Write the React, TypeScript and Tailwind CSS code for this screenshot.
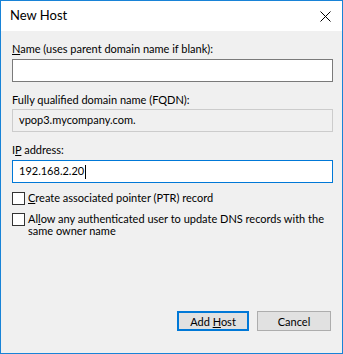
const font = { fontFamily: 'Lato, "Noto Sans", sans-serif' };

const Check = ({ children }: { children: React.ReactNode }) => (
  <div className="flex items-start gap-[3px]">
    <span className="h-[13px] w-[13px] shrink-0 border border-[#333] bg-white" />
    <span className="pt-[0px] leading-[12px]">{children}</span>
  </div>
);

export default function App() {
  return (
    <div
      className="flex h-[354px] w-[343px] flex-col border border-[#1883d7] bg-[#f0f0f0] text-[11px] text-black"
      style={font}
    >
      <div className="flex h-[30px] shrink-0 items-center justify-between bg-white pl-[9px] pr-[11px]">
        <span className="text-[13px]">New Host</span>
        <svg width="11" height="11" viewBox="0 0 11 11">
          <path d="M0.5 0.5 L10.5 10.5 M10.5 0.5 L0.5 10.5" stroke="#000" strokeWidth="1" />
        </svg>
      </div>
      <div className="flex flex-1 flex-col pl-[11px] pr-[9px]">
        <div className="mt-[10px] h-[16px] leading-[16px]">
          <u>N</u>ame (uses parent domain name if blank):
        </div>
        <div className="mt-[2px] h-[23px] border border-[#7a7a7a] bg-white" />
        <div className="mt-[10px] h-[16px] leading-[16px]">Fully qualified domain name (FQDN):</div>
        <div className="mt-[1px] flex h-[23px] items-center border border-[#cccccc] bg-[#f0f0f0] pl-[6px]">
          vpop3.mycompany.com.
        </div>
        <div className="mt-[10px] h-[16px] leading-[16px]">
          I<u>P</u> address:
        </div>
        <div className="mt-[2px] flex h-[23px] items-center border border-[#0078d7] bg-white pl-[6px]">
          192.168.2.20
          <span className="ml-[1px] inline-block h-[14px] w-[1px] bg-black" />
        </div>
        <div className="mt-[9px]">
          <Check>
            <u>C</u>reate associated pointer (PTR) record
          </Check>
        </div>
        <div className="mt-[8px]">
          <Check>
            Al<u>l</u>ow any authenticated user to update DNS records with the same owner name
          </Check>
        </div>
        <div className="mt-auto mb-[22px] flex justify-end gap-[8px] pr-[2px]">
          <button className="h-[20px] w-[72px] border-2 border-[#0078d7] bg-[#e1e1e1] text-[11px] leading-none">
            Add <u>H</u>ost
          </button>
          <button className="h-[20px] w-[74px] border border-[#adadad] bg-[#e1e1e1] text-[11px] leading-none">
            Cancel
          </button>
        </div>
      </div>
    </div>
  );
}
